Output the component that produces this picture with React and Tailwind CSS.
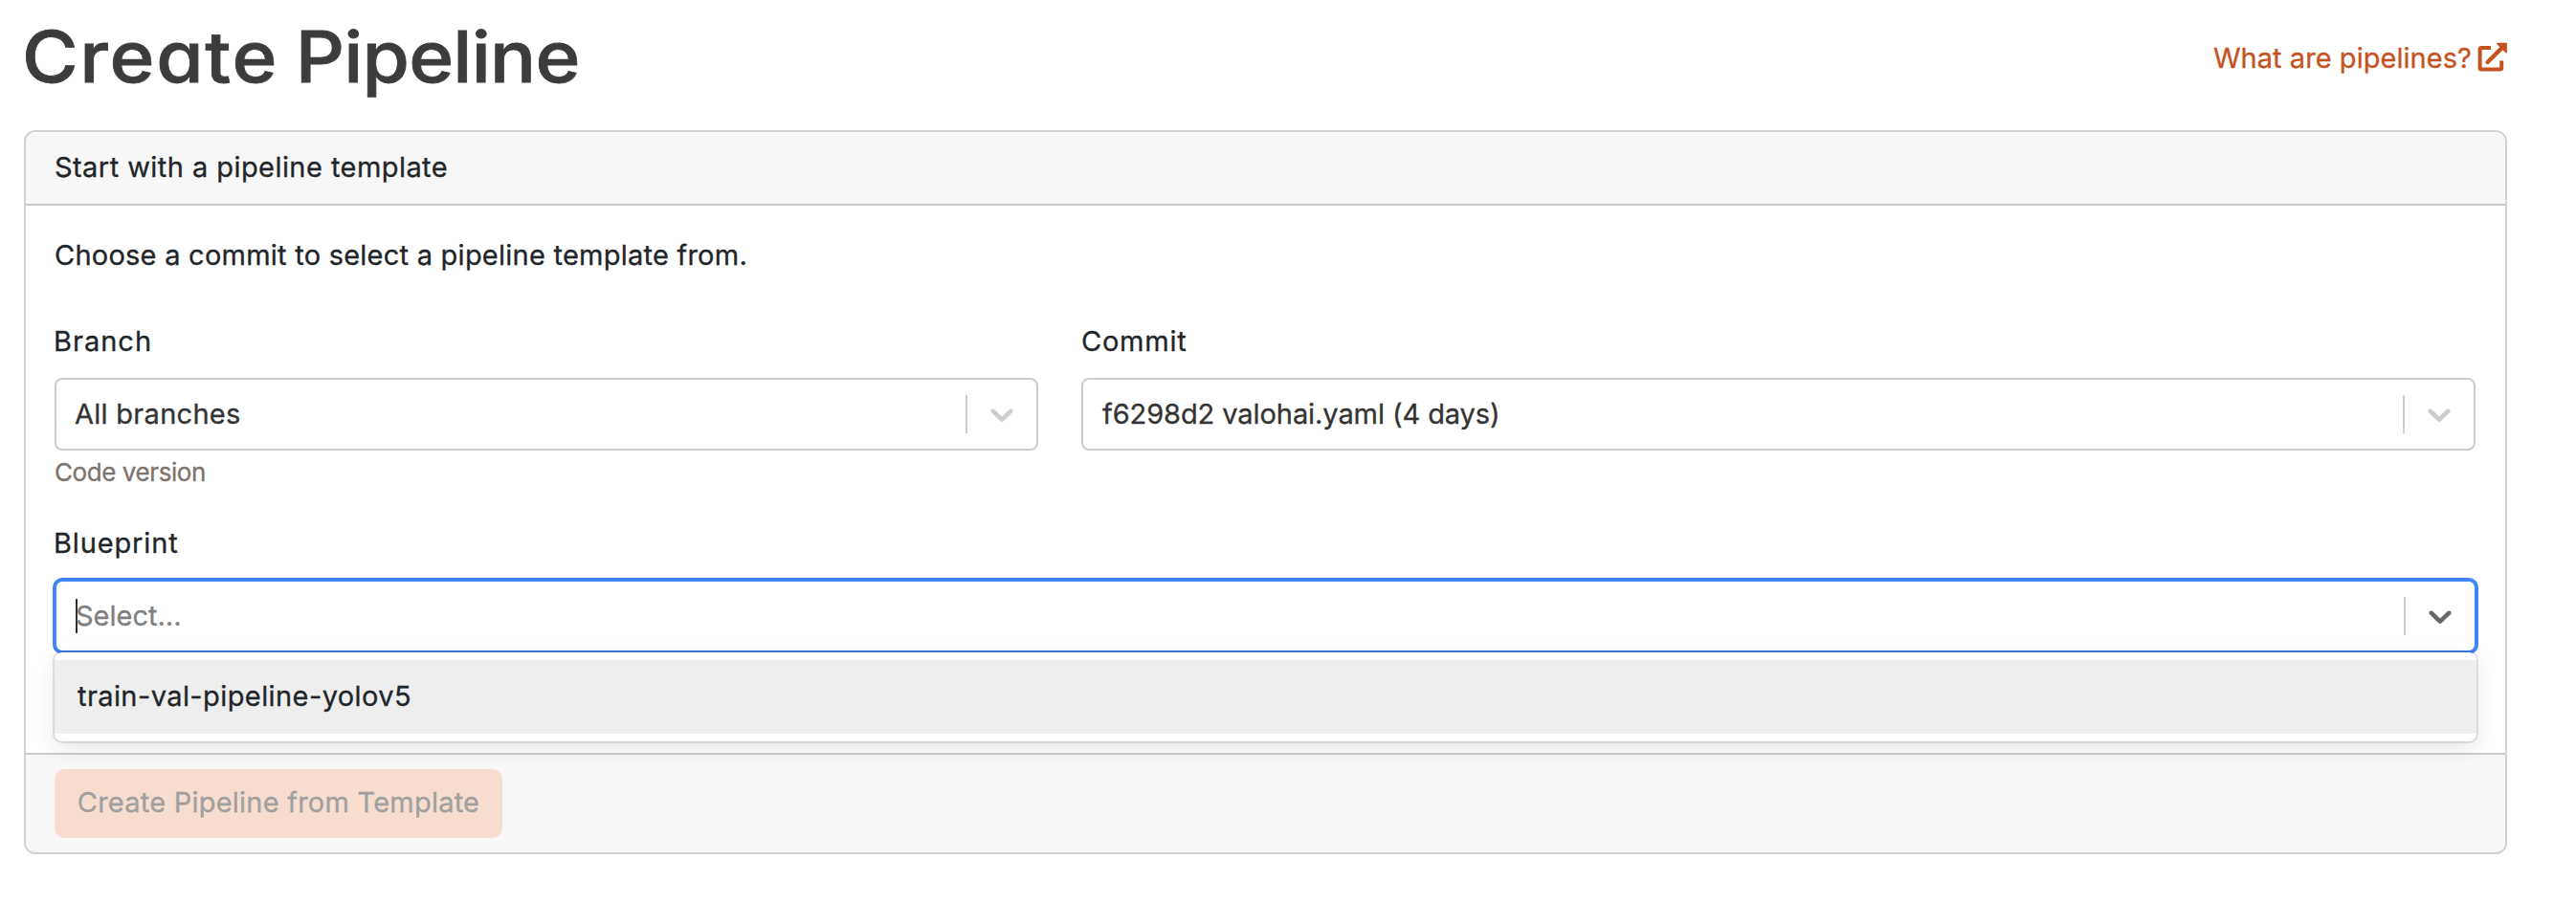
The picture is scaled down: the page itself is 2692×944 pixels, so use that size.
import React from "react";

function ExternalLinkIcon() {
  return (
    <svg className="h-[32px] w-[31px] shrink-0" viewBox="0 0 31 32" fill="none" stroke="currentColor">
      <path d="M14 6H4.1Q2.6 6 2.6 7.5V27.1Q2.6 28.6 4.1 28.6H23.7Q25.2 28.6 25.2 27.1V19.5" strokeWidth="4" />
      <path d="M10.6 21 26 5.6" strokeWidth="4.4" strokeLinecap="round" />
      <path d="M21 1.6H30V10.6Z" fill="currentColor" strokeWidth="1.8" strokeLinejoin="round" />
    </svg>
  );
}

function Indicator({ active }) {
  return (
    <div className="flex h-full shrink-0 items-center gap-4 pr-4">
      <div className="h-10 w-[2px] bg-[#cccccc]" />
      <svg className={active ? "size-10 fill-[#666666]" : "size-10 fill-[#cccccc]"} viewBox="0 0 20 20">
        <path d="M4.516 7.548c0.436-0.446 1.043-0.481 1.576 0l3.908 3.747 3.908-3.747c0.533-0.481 1.141-0.446 1.574 0 0.436 0.445 0.408 1.197 0 1.615-0.406 0.418-4.695 4.502-4.695 4.502-0.217 0.223-0.502 0.335-0.787 0.335s-0.57-0.112-0.789-0.335c0 0-4.287-4.084-4.695-4.502s-0.436-1.17 0-1.615z" />
      </svg>
    </div>
  );
}

function Select({ children }) {
  return (
    <div className="flex h-[76px] items-center justify-between rounded-lg border-2 border-[#cccccc] bg-white pl-5 text-[#333333]">
      {children}
      <Indicator />
    </div>
  );
}

export default function App() {
  return (
    <div className="h-[944px] w-[2692px] bg-white pl-[25px] pr-[72px] pt-[14px] font-['Inter','Liberation_Sans',sans-serif] text-[29px] leading-[45px] text-[#212529] [-webkit-text-stroke:0.3px]">
      <header className="flex h-[90px] items-center justify-between">
        <h1 className="-ml-[2px] origin-left scale-x-[1.08] text-[74px] font-medium leading-[90px] text-[#3c3c3c] [-webkit-text-stroke:0.8px] [font-feature-settings:'cv11'_1] [word-spacing:-3.5px]">
          <span className="tracking-[1.6px]">Create</span> <span className="-tracking-[0.7px]">Pipeline</span>
        </h1>
        <a className="flex items-center gap-[6px] pt-[2px] tracking-[0.05px] text-[#c45321]">
          <span className="pt-px">What are pipelines?</span>
          <ExternalLinkIcon />
        </a>
      </header>

      <section className="mt-8 flex h-[757px] flex-col rounded-[12px] border-2 border-[#d2d2d2]">
        <div className="flex h-[77px] items-center rounded-t-[10px] border-b-2 border-[#cacaca] bg-[#f7f7f7] px-[30px] pb-[2px] tracking-[0.44px]">
          Start with a pipeline template
        </div>

        <div className="h-[572px] px-[30px] pt-[29px]">
          <p className="tracking-[0.24px]">Choose a commit to select a pipeline template from.</p>

          <div className="mt-[45px] grid grid-cols-[1028px_1457px] gap-[45px]">
            <div>
              <div className="-ml-px mb-4 tracking-[1px]">Branch</div>
              <Select>
                <span className="-ml-px pb-px tracking-[0.28px]">All branches</span>
              </Select>
              <div className="mt-[3px] text-[26px] leading-10 -tracking-[0.42px] text-[#7b736c]">Code version</div>
            </div>
            <div>
              <div className="mb-4 tracking-[0.75px]">Commit</div>
              <Select>
                <span className="pb-px -tracking-[0.08px]">f6298d2 valohai.yaml (4 days)</span>
              </Select>
            </div>
          </div>

          <div className="-ml-px mb-4 mt-[31px] tracking-[0.85px]">Blueprint</div>
          <div className="relative w-[2531px]">
            <div className="flex h-[76px] items-center justify-between rounded-lg border-2 border-[#4284fa] bg-white pl-5 shadow-[0_0_0_2px_#4284fa]">
              <div className="flex items-center">
                <div className="-mr-[2px] h-9 w-[2px] bg-[#333333]" />
                <span className="pb-[2px] text-[#808080]">Select...</span>
              </div>
              <Indicator active />
            </div>
            <div className="absolute left-0 top-full w-full rounded-lg bg-white py-2 shadow-[0_0_0_2px_rgba(0,0,0,0.1),0_8px_22px_rgba(0,0,0,0.1)]">
              <div className="flex h-[77px] items-center bg-[#eeeeee] px-6 pb-[2px] tracking-[0.41px]">
                train-val-pipeline-yolov5
              </div>
            </div>
          </div>
        </div>

        <div className="flex h-[104px] items-center rounded-b-[10px] border-t-2 border-[#cacaca] bg-[#f7f7f7] px-[30px]">
          <button className="flex h-[72px] w-[468px] items-center justify-center rounded-[10px] bg-[#f6ddd0] pb-[3px] tracking-[0.23px] text-[#a0a0a0]">
            Create Pipeline from Template
          </button>
        </div>
      </section>
    </div>
  );
}
